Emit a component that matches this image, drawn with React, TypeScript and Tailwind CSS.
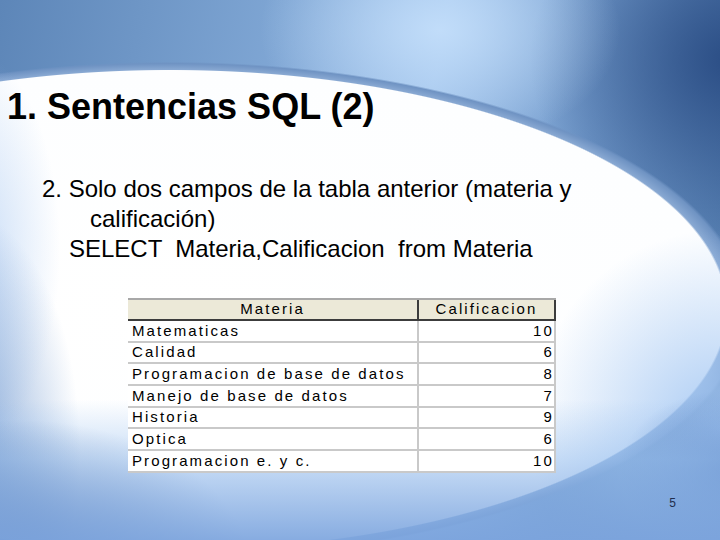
const materias: [string, number][] = [
  ['Matematicas', 10],
  ['Calidad', 6],
  ['Programacion de base de datos', 8],
  ['Manejo de base de datos', 7],
  ['Historia', 9],
  ['Optica', 6],
  ['Programacion e. y c.', 10]
]

const slideBg =
  'bg-[linear-gradient(to_bottom,rgba(150,190,240,0)_0%,rgba(150,190,240,0)_74%,rgba(150,190,238,0.5)_85%,rgba(125,165,222,0.92)_100%),radial-gradient(ellipse_230px_150px_at_20px_570px,rgba(50,85,145,0.9),rgba(50,85,145,0)),radial-gradient(ellipse_120px_240px_at_-40px_450px,rgba(95,140,202,0.8),rgba(95,140,202,0)),radial-gradient(ellipse_90px_200px_at_-30px_250px,rgba(160,195,240,0.6),rgba(160,195,240,0)),radial-gradient(ellipse_110px_80px_at_730px_470px,rgba(80,120,185,0.7),rgba(80,120,185,0)),radial-gradient(ellipse_190px_200px_at_720px_430px,rgba(165,200,243,0.95),rgba(165,200,243,0)),radial-gradient(ellipse_580px_250px_at_170px_310px,#ffffff_0,#fdfeff_95.8%,#88a8d2_96.2%,#6f93c3_98.6%,rgba(111,147,195,0)_99.3%),radial-gradient(ellipse_180px_120px_at_440px_30px,rgba(195,222,250,0.95),rgba(195,222,250,0)),radial-gradient(ellipse_200px_180px_at_730px_60px,rgba(38,72,128,0.9),rgba(38,72,128,0)),linear-gradient(100deg,#5d86b8_0%,#7fa6d4_35%,#9ec1ea_55%,#7199ca_75%,#4a73a6_100%)]'

function MateriaTable() {
  return (
    <div className="ml-[128px] mt-[34px] w-[428px] font-['Liberation_Sans',Arial,sans-serif] text-[15px] tracking-[2.1px] text-black">
      <div className="flex h-[23px] border-t-2 border-[#a8a8a8] bg-[#ece9d8]">
        <div className="flex w-[291px] items-center justify-center border-r-2 border-b-2 border-[#3c3c3c]">
          Materia
        </div>
        <div className="flex w-[137px] items-center justify-center border-r-2 border-b-2 border-[#3c3c3c]">
          Calificacion
        </div>
      </div>
      {materias.map(([nombre, nota]) => (
        <div key={nombre} className="flex h-[21.7px] bg-white">
          <div className="flex w-[291px] items-center border-r-2 border-b-2 border-[#c9c9c9] pl-[4px] whitespace-nowrap">
            {nombre}
          </div>
          <div className="flex w-[137px] items-center justify-end border-r-2 border-b-2 border-[#c9c9c9]">
            {nota}
          </div>
        </div>
      ))}
    </div>
  )
}

export default function App() {
  return (
    <div
      className={`flex h-[540px] w-[720px] flex-col overflow-hidden pt-[87px] font-['Liberation_Sans',Arial,sans-serif] text-black ${slideBg}`}
    >
      <h1 className="pl-[7px] text-[36px] leading-[40px] font-bold">
        1. Sentencias SQL (2)
      </h1>

      <div className="mt-[47px] w-[660px] text-[24px] leading-[30px]">
        <p className="pl-[90px] -indent-[48px]">
          2. Solo dos campos de la tabla anterior (materia y calificación)
        </p>
        <p className="pl-[69px] whitespace-pre">
          SELECT  Materia,Calificacion  from Materia
        </p>
      </div>

      <MateriaTable />

      <div className="mt-[23px] flex w-[720px] justify-end pr-[44px] text-[12px] leading-[14px] text-[#1f2d4d]">
        5
      </div>
    </div>
  )
}
